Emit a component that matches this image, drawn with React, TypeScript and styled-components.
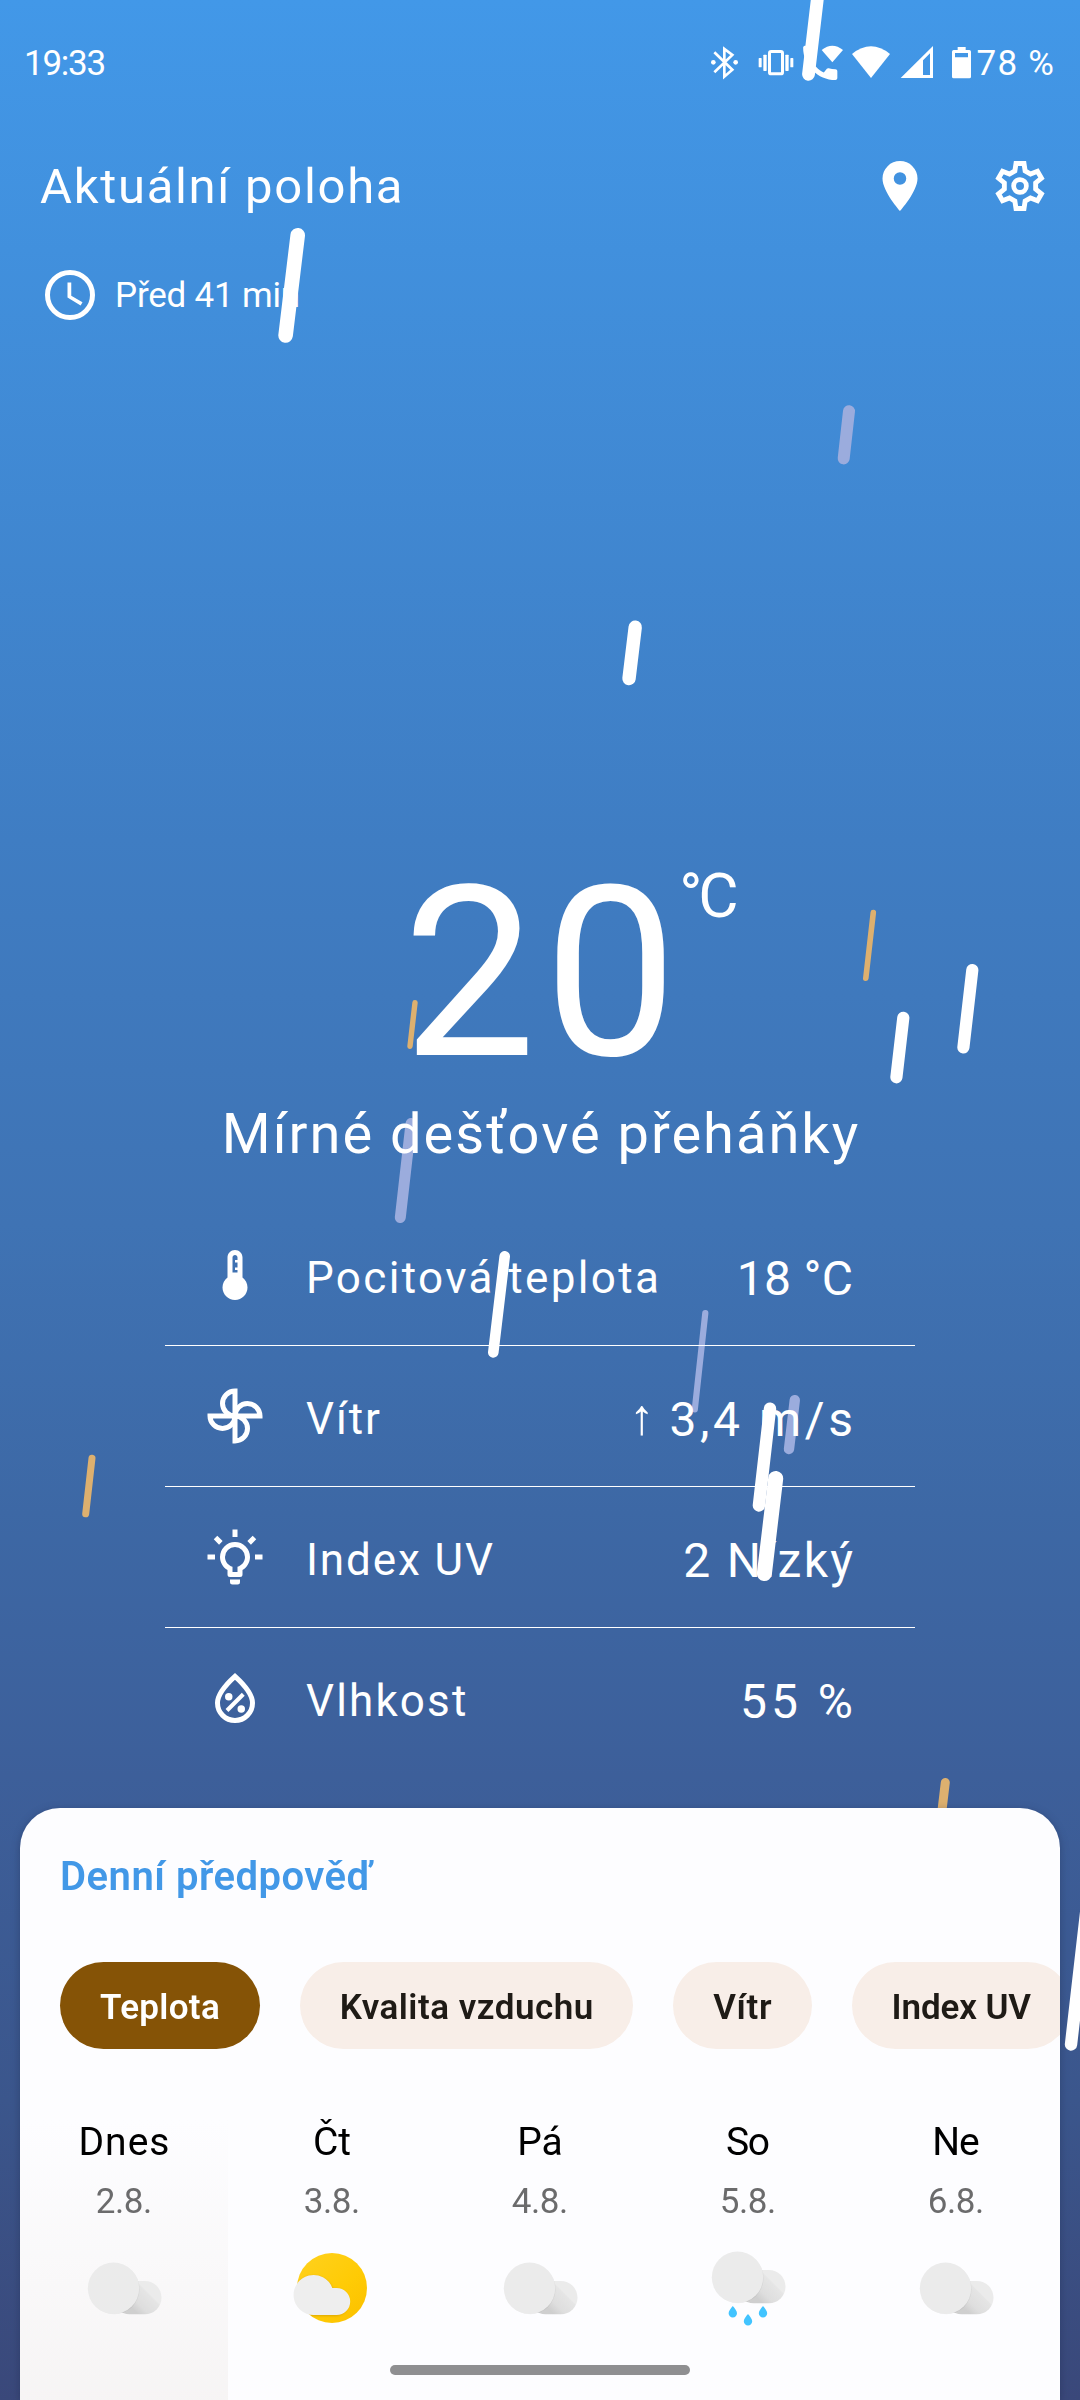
import React from 'react';
import styled, { createGlobalStyle } from 'styled-components';

const GlobalStyle = createGlobalStyle`
  *, *::before, *::after { box-sizing: border-box; }
  body { margin: 0; font-family: Roboto, 'Noto Sans', sans-serif; }
  svg { display: block; flex: none; }
`;

const Screen = styled.div`
  position: relative;
  display: flex;
  flex-direction: column;
  width: 1080px;
  height: 2400px;
  overflow: hidden;
  color: #fff;
  background: linear-gradient(
    180deg,
    #4298e8 0%,
    #3f7dc3 35%,
    #3f73b4 51%,
    #3d68a5 63%,
    #3d5f9a 74%,
    #3b568c 87.5%,
    #3a487a 100%
  );

  & > * { flex-shrink: 0; }
`;

const Rain = styled.svg`
  position: absolute;
  inset: 0;
`;

/* Text whose tracking does not leave a trailing gap after the last letter. */
const Tracked = styled.span<{ $track?: number }>`
  letter-spacing: ${(p) => p.$track ?? 0}px;
  margin-right: ${(p) => -(p.$track ?? 0)}px;
  white-space: pre;
`;

const StatusBar = styled.header`
  position: relative;
  display: flex;
  align-items: center;
  justify-content: space-between;
  height: 127px;
  padding: 0 26px 0 24px;
  font-size: 35px;
  line-height: 41px;
`;

const StatusIcons = styled.div`
  display: flex;
  align-items: center;
`;

const StatusGlyph = styled.svg`
  height: 35px;
  margin-bottom: 2px;
`;

const TopBar = styled.div`
  position: relative;
  display: flex;
  align-items: center;
  justify-content: space-between;
  height: 118px;
  padding: 0 30px 0 40px;
  margin-bottom: 2px;
`;

const LocationName = styled.h1`
  margin: 2px 0 0;
  font-size: 49px;
  font-weight: 400;
  line-height: 60px;
`;

const Actions = styled.div`
  display: flex;
  gap: 60px;
`;

const Updated = styled.div`
  position: relative;
  display: flex;
  align-items: center;
  gap: 15px;
  height: 96px;
  padding-left: 40px;
  font-size: 35px;
  line-height: 41px;
`;

const Hero = styled.section`
  position: relative;
  margin-top: 521px;
`;

const TemperatureLine = styled.div`
  display: grid;
  grid-template-columns: 1fr auto 1fr;
  align-items: start;
`;

const Temperature = styled(Tracked)`
  grid-column: 2;
  font-size: 237px;
  line-height: 220px;
`;

const Unit = styled(Tracked)`
  margin-left: 2px;
  font-size: 62px;
  line-height: 64px;
`;

const Condition = styled.p`
  margin: 0;
  text-align: center;
  font-size: 56px;
  line-height: 101px;
`;

const Details = styled.ul`
  position: relative;
  width: 750px;
  margin: 20px auto 0;
  padding: 0;
  list-style: none;
`;

const DetailRow = styled.li`
  display: flex;
  align-items: center;
  height: 141px;
  padding: 0 62px 0 40px;
  border-bottom: 1px solid #fff;

  &:last-child { height: 140px; border-bottom: 0; }
`;

const DetailLabel = styled(Tracked)`
  flex: 1;
  margin-left: 41px;
  padding-top: 5px;
  font-size: 44px;
`;

const DetailValue = styled(Tracked)`
  padding-top: 6px;
  font-size: 48px;
`;

const WindArrow = styled.span`
  margin-right: 15px;
  padding-top: 2px;
  font-size: 50px;
`;

const Card = styled.section`
  flex: 1;
  min-height: 0;
  margin: 0 20px;
  overflow: hidden;
  border-radius: 40px 40px 0 0;
  background: #fdfdff;
`;

const CardShade = styled.div`
  position: relative;
  display: flex;
  flex: 1 1 0;
  flex-direction: column;
  min-height: 0;
  margin-top: 40px;
  filter: drop-shadow(0 2px 4px rgba(20, 30, 60, 0.35));
`;

const CardTitle = styled.h2`
  margin: 39px 0 0 40px;
  font-size: 40px;
  font-weight: 600;
  line-height: 60px;
  color: #4298e7;
`;

const Chips = styled.div`
  display: flex;
  gap: 40px;
  margin: 55px 0 0 40px;
`;

const Chip = styled.button<{ $active?: boolean }>`
  flex: none;
  height: 87px;
  padding: 3px 40px 0;
  border: 0;
  border-radius: 43.5px;
  font: 600 35px/41px Roboto, 'Noto Sans', sans-serif;
  color: ${(p) => (p.$active ? '#fff' : '#1f1b16')};
  background: ${(p) => (p.$active ? '#855306' : '#f8eee8')};
`;

const Days = styled.div`
  display: grid;
  grid-template-columns: repeat(5, 208px);
  margin-top: 51px;
`;

const Day = styled.div<{ $today?: boolean }>`
  display: flex;
  flex-direction: column;
  align-items: center;
  height: 400px;
  padding-top: 12px;
  background: ${(p) =>
    p.$today ? 'linear-gradient(180deg, #fdfdff 5%, #f6f4f4 80%)' : 'none'};
`;

const DayName = styled(Tracked)`
  font-size: 39px;
  line-height: 60px;
  color: #000;
`;

const DayDate = styled(Tracked)`
  margin-top: 5px;
  margin-bottom: 22px;
  font-size: 35px;
  line-height: 49px;
  color: #6b6b6c;
`;

const HomeIndicator = styled.div`
  position: absolute;
  bottom: 25px;
  left: 390px;
  width: 300px;
  height: 10px;
  border-radius: 5px;
  background: #8f8f91;
`;

const DROP = { white: '#ffffff', violet: '#9bacdd', amber: '#ddb06f' };

type Drop = [keyof typeof DROP, number, number, number, number, number];

/* colour, tip x / y, tail x / y, thickness */
const drops: Drop[] = [
  ['white', 820, -30, 808.5, 80.7, 12.8],
  ['white', 297.7, 228, 285.6, 342.7, 14.6],
  ['violet', 849, 405.2, 843.7, 464.4, 12],
  ['white', 635.2, 620.5, 629, 685.3, 13.4],
  ['amber', 873.3, 909.8, 865.8, 981, 5.6],
  ['white', 972.3, 964, 963.4, 1053.5, 12.2],
  ['white', 903.3, 1011.7, 896.4, 1083.4, 12.2],
  ['amber', 415, 1000, 410, 1049, 5.4],
  ['violet', 411, 1118, 400.3, 1223, 11],
  ['white', 504.7, 1251, 493.3, 1357.7, 10.6],
  ['violet', 705.3, 1310, 694.8, 1412.5, 6.2],
  ['violet', 794.8, 1395, 789, 1454.2, 10.4],
  ['white', 770, 1402.5, 758.9, 1511.7, 12.4],
  ['white', 775.7, 1471, 764.4, 1581, 15],
  ['amber', 92, 1454.7, 85.7, 1517.3, 7],
  ['amber', 945.3, 1778, 939, 1840, 9],
  ['white', 1088, 1890, 1071, 2050.7, 12.4],
];

const RainLayer = () => (
  <Rain width="1080" height="2400" viewBox="0 0 1080 2400" strokeLinecap="round">
    {drops.map(([color, x1, y1, x2, y2, w], i) => (
      <line
        key={i}
        x1={x1}
        y1={y1 + w / 2}
        x2={x2}
        y2={y2 - w / 2}
        stroke={DROP[color]}
        strokeWidth={w}
      />
    ))}
  </Rain>
);

const Icon = ({ children }: { children: React.ReactNode }) => (
  <svg width="60" height="60" viewBox="0 0 24 24" fill="currentColor">
    {children}
  </svg>
);

const PinIcon = () => (
  <Icon>
    <path d="M12 11.5A2.5 2.5 0 1 1 12 6.5a2.5 2.5 0 0 1 0 5M12 2a7 7 0 0 0-7 7c0 5.25 7 13 7 13s7-7.75 7-13a7 7 0 0 0-7-7Z" />
  </Icon>
);

const teeth = [0, 60, 120, 180, 240, 300]
  .flatMap((deg) => {
    const a = (deg * Math.PI) / 180;
    return [
      [-2.05, -6.05],
      [-1.6, -9],
      [1.6, -9],
      [2.05, -6.05],
    ].map(([x, y]) => {
      const px = 12 + x * Math.cos(a) - y * Math.sin(a);
      const py = 12 + x * Math.sin(a) + y * Math.cos(a);
      return `${px.toFixed(2)},${py.toFixed(2)}`;
    });
  })
  .join(' ');

const GearIcon = () => (
  <Icon>
    <polygon points={teeth} fill="none" stroke="currentColor" strokeWidth="1.95" />
    <circle cx="12" cy="12" r="2.55" fill="none" stroke="currentColor" strokeWidth="1.9" />
  </Icon>
);

const ClockIcon = () => (
  <Icon>
    <circle cx="12" cy="12" r="9" fill="none" stroke="currentColor" strokeWidth="2" />
    <path d="M12.5 7H11v6l5.25 3.15.75-1.23-4.5-2.67z" />
  </Icon>
);

const ThermometerIcon = () => (
  <Icon>
    <path d="M15 13V5c0-1.66-1.34-3-3-3S9 3.34 9 5v8c-1.21.91-2 2.37-2 4 0 2.76 2.24 5 5 5s5-2.24 5-5c0-1.63-.79-3.09-2-4zm-4-8c0-.55.45-1 1-1s1 .45 1 1v1h-1v1h1v2h-1v1h1v1h-2V5z" />
  </Icon>
);

const PinwheelIcon = () => (
  <Icon>
    <g fill="none" stroke="currentColor" strokeWidth="2">
      {[0, 90, 180, 270].map((deg) => (
        <path key={deg} d="M12 12V2a5 5 0 0 0 0 10z" transform={`rotate(${deg} 12 12)`} />
      ))}
    </g>
  </Icon>
);

const BulbIcon = () => (
  <Icon>
    <path d="M20,11H23V13H20V11M1,11H4V13H1V11M13,1V4H11V1H13M4.92,3.5L7.05,5.64L5.63,7.05L3.5,4.93L4.92,3.5M16.95,5.63L19.07,3.5L20.5,4.93L18.37,7.05L16.95,5.63M12,6A6,6 0 0,1 18,12C18,14.22 16.79,16.16 15,17.2V19A1,1 0 0,1 14,20H10A1,1 0 0,1 9,19V17.2C7.21,16.16 6,14.22 6,12A6,6 0 0,1 12,6M14,21V22A1,1 0 0,1 13,23H11A1,1 0 0,1 10,22V21H14M11,18H13V15.87C14.73,15.43 16,13.86 16,12A4,4 0 0,0 12,8A4,4 0 0,0 8,12C8,13.86 9.27,15.43 11,15.87V18Z" />
  </Icon>
);

const HumidityIcon = () => (
  <Icon>
    <path
      d="M12 3.35C7.3 7.6 5 11 5 14a7 7 0 0 0 14 0c0-3-2.3-6.4-7-10.65z"
      fill="none"
      stroke="currentColor"
      strokeWidth="2"
    />
    <circle cx="9.5" cy="11.5" r="1.5" />
    <circle cx="14.5" cy="16.4" r="1.5" />
    <path d="M8.8 17l6.5-6.5" stroke="currentColor" strokeWidth="1.6" />
  </Icon>
);

const SystemIcons = () => (
  <>
    <StatusGlyph width="40" viewBox="210 135 120 105" fill="none" stroke="#fff" strokeWidth="8">
      <path d="M223 157l54 52-24 21v-83l24 18-54 52" strokeLinejoin="miter" />
      <circle cx="220" cy="187" r="7" fill="#fff" stroke="none" />
      <circle cx="287" cy="187" r="7" fill="#fff" stroke="none" />
    </StatusGlyph>
    <StatusGlyph width="50" viewBox="330 135 150 105" fill="#fff">
      <rect x="388.500" y="154.500" width="39" height="67" rx="5" fill="none" stroke="#fff" strokeWidth="9" />
      <rect x="370" y="164" width="10" height="49" rx="2" />
      <rect x="356" y="174" width="9" height="28" rx="2" />
      <rect x="436" y="164" width="10" height="49" rx="2" />
      <rect x="451" y="174" width="9" height="28" rx="2" />
    </StatusGlyph>
    <StatusGlyph width="47" viewBox="480 135 141 105" fill="#fff">
      <path
        transform="translate(472.300 120.300) scale(5.7)"
        d="M20.010 15.380c-1.230 0-2.420-.2-3.530-.56-.35-.12-.74-.03-1.010.24l-1.570 1.970c-2.830-1.350-5.480-3.900-6.890-6.830l1.950-1.660c.27-.28.35-.67.24-1.020-.37-1.110-.56-2.300-.56-3.530 0-.54-.45-.99-.99-.99H4.190C3.650 3 3 3.240 3 3.990 3 13.280 10.730 21 20.010 21c.71 0 .99-.63.99-1.180v-3.450c0-.54-.45-.99-.99-.99z"
      />
      <path d="M545 150q32-26 64 0l-32 37z" />
    </StatusGlyph>
    <StatusGlyph width="48" viewBox="621 135 144 105" fill="#fff">
      <path d="M636 162q57-46 114 0l-57 72z" />
    </StatusGlyph>
    <StatusGlyph width="45" viewBox="765 135 135 105" fill="#fff">
      <path fillRule="evenodd" d="M879 138v96h-97zM870 160v65h-21v-44z" />
    </StatusGlyph>
    <StatusGlyph width="36" viewBox="900 135 108 105" fill="#fff">
      <path
        fillRule="evenodd"
        d="M953 141h24v9h11q5 0 5 5v75q0 5-5 5h-47q-5 0-5-5v-75q0-5 5-5h12zM945 159v13h39v-13z"
      />
    </StatusGlyph>
  </>
);

const CloudShape = ({ id }: { id: string }) => (
  <g>
    <defs>
      <linearGradient id={`${id}-back`} gradientUnits="userSpaceOnUse" x1="48" y1="60" x2="64" y2="44">
        <stop offset="0" stopColor="#cfcfcf" />
        <stop offset="0.35" stopColor="#dedede" />
        <stop offset="0.93" stopColor="#e5e5e5" />
        <stop offset="1" stopColor="#ebebeb" />
      </linearGradient>
    </defs>
    <rect x="29" y="33" width="48.500" height="33.300" rx="16.600" fill={`url(#${id}-back)`} />
    <circle cx="30.300" cy="41" r="25.300" fill="#000" opacity="0.06" />
    <circle cx="29.500" cy="40.300" r="25.700" fill="#ebebeb" />
  </g>
);

const CloudIcon = ({ id }: { id: string }) => (
  <svg width="80" height="80" viewBox="0 0 80 80">
    <CloudShape id={id} />
  </svg>
);

const SunCloudIcon = () => (
  <svg width="80" height="80" viewBox="0 0 80 80">
    <defs>
      <linearGradient id="sun" x1="0.1" y1="0.1" x2="0.9" y2="0.9">
        <stop offset="0" stopColor="#ffd01a" />
        <stop offset="0.6" stopColor="#ffcb05" />
        <stop offset="1" stopColor="#fcc200" />
      </linearGradient>
      <clipPath id="sun-disc">
        <circle cx="40" cy="40" r="35" />
      </clipPath>
      <filter id="soft" x="-20%" y="-20%" width="140%" height="140%">
        <feGaussianBlur stdDeviation="1.2" />
      </filter>
    </defs>
    <circle cx="40" cy="40" r="35" fill="url(#sun)" />
    <g clipPath="url(#sun-disc)">
      <path
        d="M21.700 67.800a20 20 0 1 1 18.800-27H44.700a13.600 13.600 0 0 1 0 27z"
        fill="#b98300"
        opacity="0.55"
        filter="url(#soft)"
      />
    </g>
    <path d="M21.700 67a20 20 0 1 1 18.600-27H44.700a13.500 13.500 0 0 1 0 27z" fill="#eeeeee" />
  </svg>
);

const RainCloudIcon = () => (
  <svg width="80" height="80" viewBox="0 0 80 80">
    <g transform="translate(0 -11)">
      <CloudShape id="so" />
    </g>
    <g fill="#42c4ff">
      {[
        [24.8, 58],
        [40, 66],
        [55, 58],
      ].map(([x, y]) => (
        <path
          key={x}
          transform={`translate(${x} ${y})`}
          d="M0 0C2 2.500 4.200 4.800 4.200 7.200a4.200 4.200 0 0 1-8.400 0C-4.200 4.800-2 2.500 0 0z"
        />
      ))}
    </g>
  </svg>
);

const details = [
  { icon: <ThermometerIcon />, label: 'Pocitová teplota', lt: 2.37, value: '18 °C', vt: 0.3 },
  { icon: <PinwheelIcon />, label: 'Vítr', lt: 1.9, value: '3,4 m/s', vt: 3.6, arrow: true },
  { icon: <BulbIcon />, label: 'Index UV', lt: 1.9, value: '2 Nízký', vt: 2.3 },
  { icon: <HumidityIcon />, label: 'Vlhkost', lt: 2.15, value: '55 %', vt: 4 },
];

const chips = [
  { text: 'Teplota', track: 0.3, active: true },
  { text: 'Kvalita vzduchu', track: 0.5 },
  { text: 'Vítr', track: 0.6 },
  { text: 'Index UV', track: -0.1 },
];

const days = [
  { name: 'Dnes', track: 1, date: '2.8.', icon: <CloudIcon id="dnes" />, today: true },
  { name: 'Čt', track: 0, date: '3.8.', icon: <SunCloudIcon /> },
  { name: 'Pá', track: 0, date: '4.8.', icon: <CloudIcon id="pa" /> },
  { name: 'So', track: -1.5, date: '5.8.', icon: <RainCloudIcon /> },
  { name: 'Ne', track: -1, date: '6.8.', icon: <CloudIcon id="ne" /> },
];

export default function App() {
  return (
    <>
      <GlobalStyle />
      <Screen>
        <RainLayer />
        <StatusBar>
          <Tracked $track={-1.25}>19:33</Tracked>
          <StatusIcons>
            <SystemIcons />
            <Tracked $track={1.3}>78 %</Tracked>
          </StatusIcons>
        </StatusBar>
        <TopBar>
          <LocationName>
            <Tracked $track={1.7}>Aktuální poloha</Tracked>
          </LocationName>
          <Actions>
            <PinIcon />
            <GearIcon />
          </Actions>
        </TopBar>
        <Updated>
          <ClockIcon />
          <Tracked $track={-0.2}>Před 41 min</Tracked>
        </Updated>
        <Hero>
          <TemperatureLine>
            <Temperature $track={8}>20</Temperature>
            <Unit $track={-4}>°C</Unit>
          </TemperatureLine>
          <Condition>
            <Tracked $track={2}>Mírné dešťové přeháňky</Tracked>
          </Condition>
        </Hero>
        <Details>
          {details.map((d) => (
            <DetailRow key={d.label}>
              {d.icon}
              <DetailLabel $track={d.lt}>{d.label}</DetailLabel>
              {d.arrow && <WindArrow>↑</WindArrow>}
              <DetailValue $track={d.vt}>{d.value}</DetailValue>
            </DetailRow>
          ))}
        </Details>
        <CardShade>
          <Card>
            <CardTitle>
              <Tracked $track={0.5}>Denní předpověď</Tracked>
            </CardTitle>
            <Chips>
              {chips.map((c) => (
                <Chip key={c.text} $active={c.active}>
                  <Tracked $track={c.track}>{c.text}</Tracked>
                </Chip>
              ))}
            </Chips>
            <Days>
              {days.map((d) => (
                <Day key={d.name} $today={d.today}>
                  <DayName $track={d.track}>{d.name}</DayName>
                  <DayDate $track={-0.5}>{d.date}</DayDate>
                  {d.icon}
                </Day>
              ))}
            </Days>
          </Card>
        </CardShade>
        <HomeIndicator />
      </Screen>
    </>
  );
}
